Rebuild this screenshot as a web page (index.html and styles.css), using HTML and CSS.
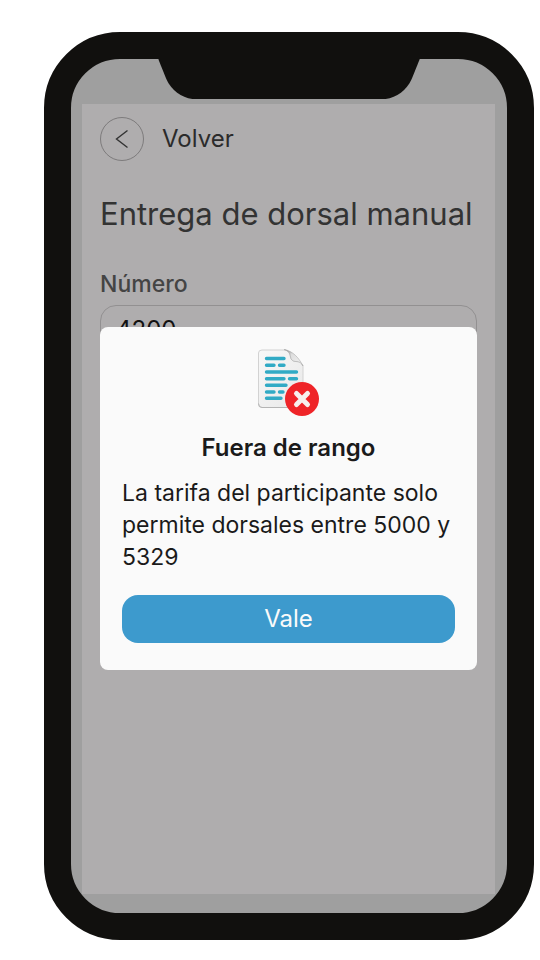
FILE: index.html
```html
<!DOCTYPE html>
<html lang="es">
<head>
<meta charset="utf-8">
<meta name="viewport" content="width=device-width, initial-scale=1">
<title>Entrega de dorsal manual</title>
<link rel="stylesheet" href="styles.css">
</head>
<body>
<div class="phone">
  <svg class="notch" viewBox="0 0 260 40" aria-hidden="true"><path d="M0 0H260L252 20C246 33 235 40 222 40H38C25 40 14 33 8 20Z" fill="#11100e"/></svg>
  <div class="app">
    <main class="page">
      <a class="back" href="#">
        <span class="back-circle">
          <svg width="14" height="20" viewBox="0 0 14 20" fill="none" stroke="#333" stroke-width="1.4" aria-hidden="true"><path d="M12.500 1.500L1.500 10L12.500 18.500"/></svg>
        </span>
        Volver
      </a>
      <h1 class="title">Entrega de dorsal manual</h1>
      <label class="label" for="numero">Número</label>
      <input class="field" id="numero" type="text" inputmode="numeric" value="4200">
    </main>
    <div class="overlay">
      <section class="dialog" role="alertdialog" aria-modal="true" aria-labelledby="dlg-title" aria-describedby="dlg-text">
        <svg class="dialog-icon" width="64" height="70" viewBox="0 0 64 70" aria-hidden="true">
          <defs>
            <linearGradient id="paper" x1="0" y1="0" x2="1" y2="1"><stop offset="0" stop-color="#f8f8f8"/><stop offset="1" stop-color="#e8e8e8"/></linearGradient>
            <linearGradient id="fold" x1="0" y1="0" x2="1" y2="1"><stop offset="0" stop-color="#777"/><stop offset=".35" stop-color="#ddd"/><stop offset="1" stop-color="#f4f4f4"/></linearGradient>
          </defs>
          <path d="M5 2H29C32 3 33 6 33.500 9C34 12 36 13.500 39 13.500C43 13.500 45 15 46 18V56Q46 59.500 42.500 59.500H5Q1.500 59.500 1.500 56V5Q1.500 2 5 2Z" fill="url(#paper)" stroke="#d2d2d2" stroke-width="1"/>
          <path d="M1.500 55.500Q1.500 59.500 5 59.500H30" fill="none" stroke="#b4b4b4" stroke-width="1"/>
          <path d="M27 1.500C36 3 42 10 46 18C44 14.500 42 13.500 39 13.500C36 13.500 34 12 33.500 9C33 6 32 3 27 1.500Z" fill="url(#fold)" stroke="#aaa" stroke-width=".6"/>
          <path d="M9.500 10.500H27M9.500 17.300H17M22.500 17.300H27M9.500 24H39.500M9.500 30.700H27M32.500 30.700H39.500M9.500 37.300H29M9.500 44H17M22.500 44H26M9.500 50.300H24" fill="none" stroke="#31aac5" stroke-width="3.400" stroke-linecap="round"/>
          <circle cx="45" cy="51" r="17" fill="#ef2428"/>
          <path d="M39.500 45.500L50.500 56.500M50.500 45.500L39.500 56.500" stroke="#f7efed" stroke-width="5" stroke-linecap="round"/>
        </svg>
        <h2 class="dialog-title" id="dlg-title">Fuera de rango</h2>
        <p class="dialog-text" id="dlg-text">La tarifa del participante solo permite dorsales entre 5000 y 5329</p>
        <button class="dialog-button" type="button">Vale</button>
      </section>
    </div>
  </div>
</div>
</body>
</html>
```
FILE: styles.css
```css
* { box-sizing: border-box; }

body {
  margin: 0;
  min-height: 100vh;
  padding: 32px 6px 20px 44px;
  display: flex;
  background: #fff;
  font-family: Inter, "Liberation Sans", sans-serif;
  color: #1a1a1a;
}

.phone {
  position: relative;
  flex: 1;
  min-width: 0;
  display: flex;
  padding: 45px 12px 19px 11px;
  border: 27px solid #11100e;
  border-radius: 76px;
  background: #9f9f9f;
}

.notch {
  position: absolute;
  top: 0;
  left: 50%;
  width: 60%;
  transform: translateX(-50%);
}

.app {
  position: relative;
  flex: 1;
  min-width: 0;
  background: #afadae;
}

.page {
  display: flex;
  flex-direction: column;
  padding: 13px 18px;
}

.back {
  display: flex;
  align-items: center;
  gap: 18px;
  color: #2b2b2b;
  font-size: 24px;
  line-height: 32px;
  text-decoration: none;
}

.back-circle {
  display: flex;
  align-items: center;
  justify-content: center;
  width: 44px;
  height: 44px;
  border: 1px solid #7d7b7c;
  border-radius: 50%;
}

.title {
  margin: 31px 0 0;
  color: #333;
  font-size: 31px;
  font-weight: 400;
  line-height: 44px;
  white-space: nowrap;
}

.label {
  margin-top: 32px;
  color: #444;
  font-size: 23px;
  font-weight: 500;
  line-height: 32px;
}

.field {
  width: 100%;
  height: 48px;
  margin-top: 5px;
  padding: 0 15px;
  border: 1px solid #929091;
  border-radius: 16px;
  background: transparent;
  color: #111;
  font: inherit;
  font-size: 24px;
}

.overlay {
  position: absolute;
  inset: 0;
  display: flex;
  align-items: center;
  padding: 0 18px 2px;
}

.dialog {
  display: flex;
  flex-direction: column;
  width: 100%;
  padding: 21px 22px 27px;
  border-radius: 8px;
  background: #fafafa;
}

.dialog-icon { align-self: center; }

.dialog-title {
  margin: 14px 0 0;
  font-size: 24px;
  font-weight: 600;
  line-height: 32px;
  text-align: center;
}

.dialog-text {
  margin: 13px 0 0;
  font-size: 23px;
  line-height: 32px;
}

.dialog-button {
  height: 48px;
  margin-top: 22px;
  border: 0;
  border-radius: 16px;
  background: #3d9acd;
  color: #fafafa;
  font: inherit;
  font-size: 24px;
}
```
